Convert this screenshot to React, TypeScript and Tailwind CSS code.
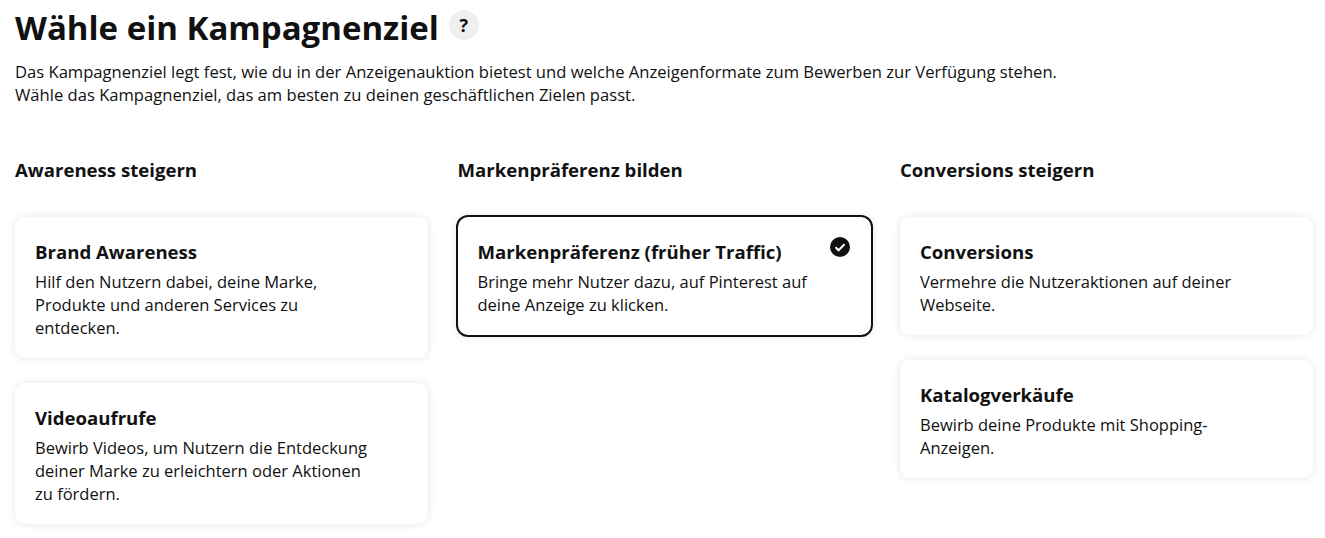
const FONT = "font-['Open_Sans','Noto_Sans',sans-serif]";

type Ziel = { titel: string; text: string[]; aktiv?: boolean };

const spalten: { name: string; ziele: Ziel[] }[] = [
  {
    name: 'Awareness steigern',
    ziele: [
      { titel: 'Brand Awareness', text: ['Hilf den Nutzern dabei, deine Marke,', 'Produkte und anderen Services zu', 'entdecken.'] },
      { titel: 'Videoaufrufe', text: ['Bewirb Videos, um Nutzern die Entdeckung', 'deiner Marke zu erleichtern oder Aktionen', 'zu fördern.'] },
    ],
  },
  {
    name: 'Markenpräferenz bilden',
    ziele: [
      { titel: 'Markenpräferenz (früher Traffic)', text: ['Bringe mehr Nutzer dazu, auf Pinterest auf', 'deine Anzeige zu klicken.'], aktiv: true },
    ],
  },
  {
    name: 'Conversions steigern',
    ziele: [
      { titel: 'Conversions', text: ['Vermehre die Nutzeraktionen auf deiner', 'Webseite.'] },
      { titel: 'Katalogverkäufe', text: ['Bewirb deine Produkte mit Shopping-', 'Anzeigen.'] },
    ],
  },
];

const Karte = ({ ziel }: { ziel: Ziel }) => (
  <div
    className={`relative bg-white px-5 pt-[23px] pb-[19.5px] ${
      ziel.aktiv
        ? 'border-2 border-[#111111] -mx-0.5 -my-0.5 rounded-[12px] shadow-[0_0_8px_rgba(0,0,0,0.1)]'
        : 'rounded-[10px] shadow-[0_0_8px_rgba(0,0,0,0.1)]'
    }`}
  >
    <h3 className="text-[18.6px] leading-[24px] font-bold text-[#111111]">{ziel.titel}</h3>
    <p className="mt-[5.5px] text-[16.5px] leading-[23px] text-[#111111]">
      {ziel.text.map((zeile) => (
        <span key={zeile} className="block whitespace-nowrap">{zeile}</span>
      ))}
    </p>
    {ziel.aktiv && (
      <svg viewBox="0 0 20 20" className="absolute top-[20px] right-[21px] w-5 h-5">
        <circle cx="10" cy="10" r="10" fill="#111111" />
        <path d="M5.5 10.2l3.1 3.1 5.9-6" fill="none" stroke="#ffffff" strokeWidth="2" />
      </svg>
    )}
  </div>
);

export default function App() {
  return (
    <div className={`${FONT} w-[1325px] h-[538px] overflow-hidden bg-white text-[#111111] px-[15px] pt-[6px]`}>
      <div className="flex items-center">
        <h1 className="text-[33px] leading-[44px] font-bold">Wähle ein Kampagnenziel</h1>
        <span className="ml-[10px] -mt-[6px] w-[30px] h-[30px] rounded-full bg-[#efefef] flex items-center justify-center text-lg font-bold">?</span>
      </div>
      <p className="mt-[10px] text-[16.6px] leading-[23px]">
        Das Kampagnenziel legt fest, wie du in der Anzeigenauktion bietest und welche Anzeigenformate zum Bewerben zur Verfügung stehen.
        <br />
        Wähle das Kampagnenziel, das am besten zu deinen geschäftlichen Zielen passt.
      </p>
      <div className="mt-[52px] grid grid-cols-[413px_413px_413px] gap-x-[29.5px]">
        {spalten.map((spalte) => (
          <div key={spalte.name}>
            <h2 className="text-[18.6px] leading-[24px] font-bold mb-[35px]">{spalte.name}</h2>
            <div className="flex flex-col gap-[25px]">
              {spalte.ziele.map((ziel) => (
                <Karte key={ziel.titel} ziel={ziel} />
              ))}
            </div>
          </div>
        ))}
      </div>
    </div>
  );
}
